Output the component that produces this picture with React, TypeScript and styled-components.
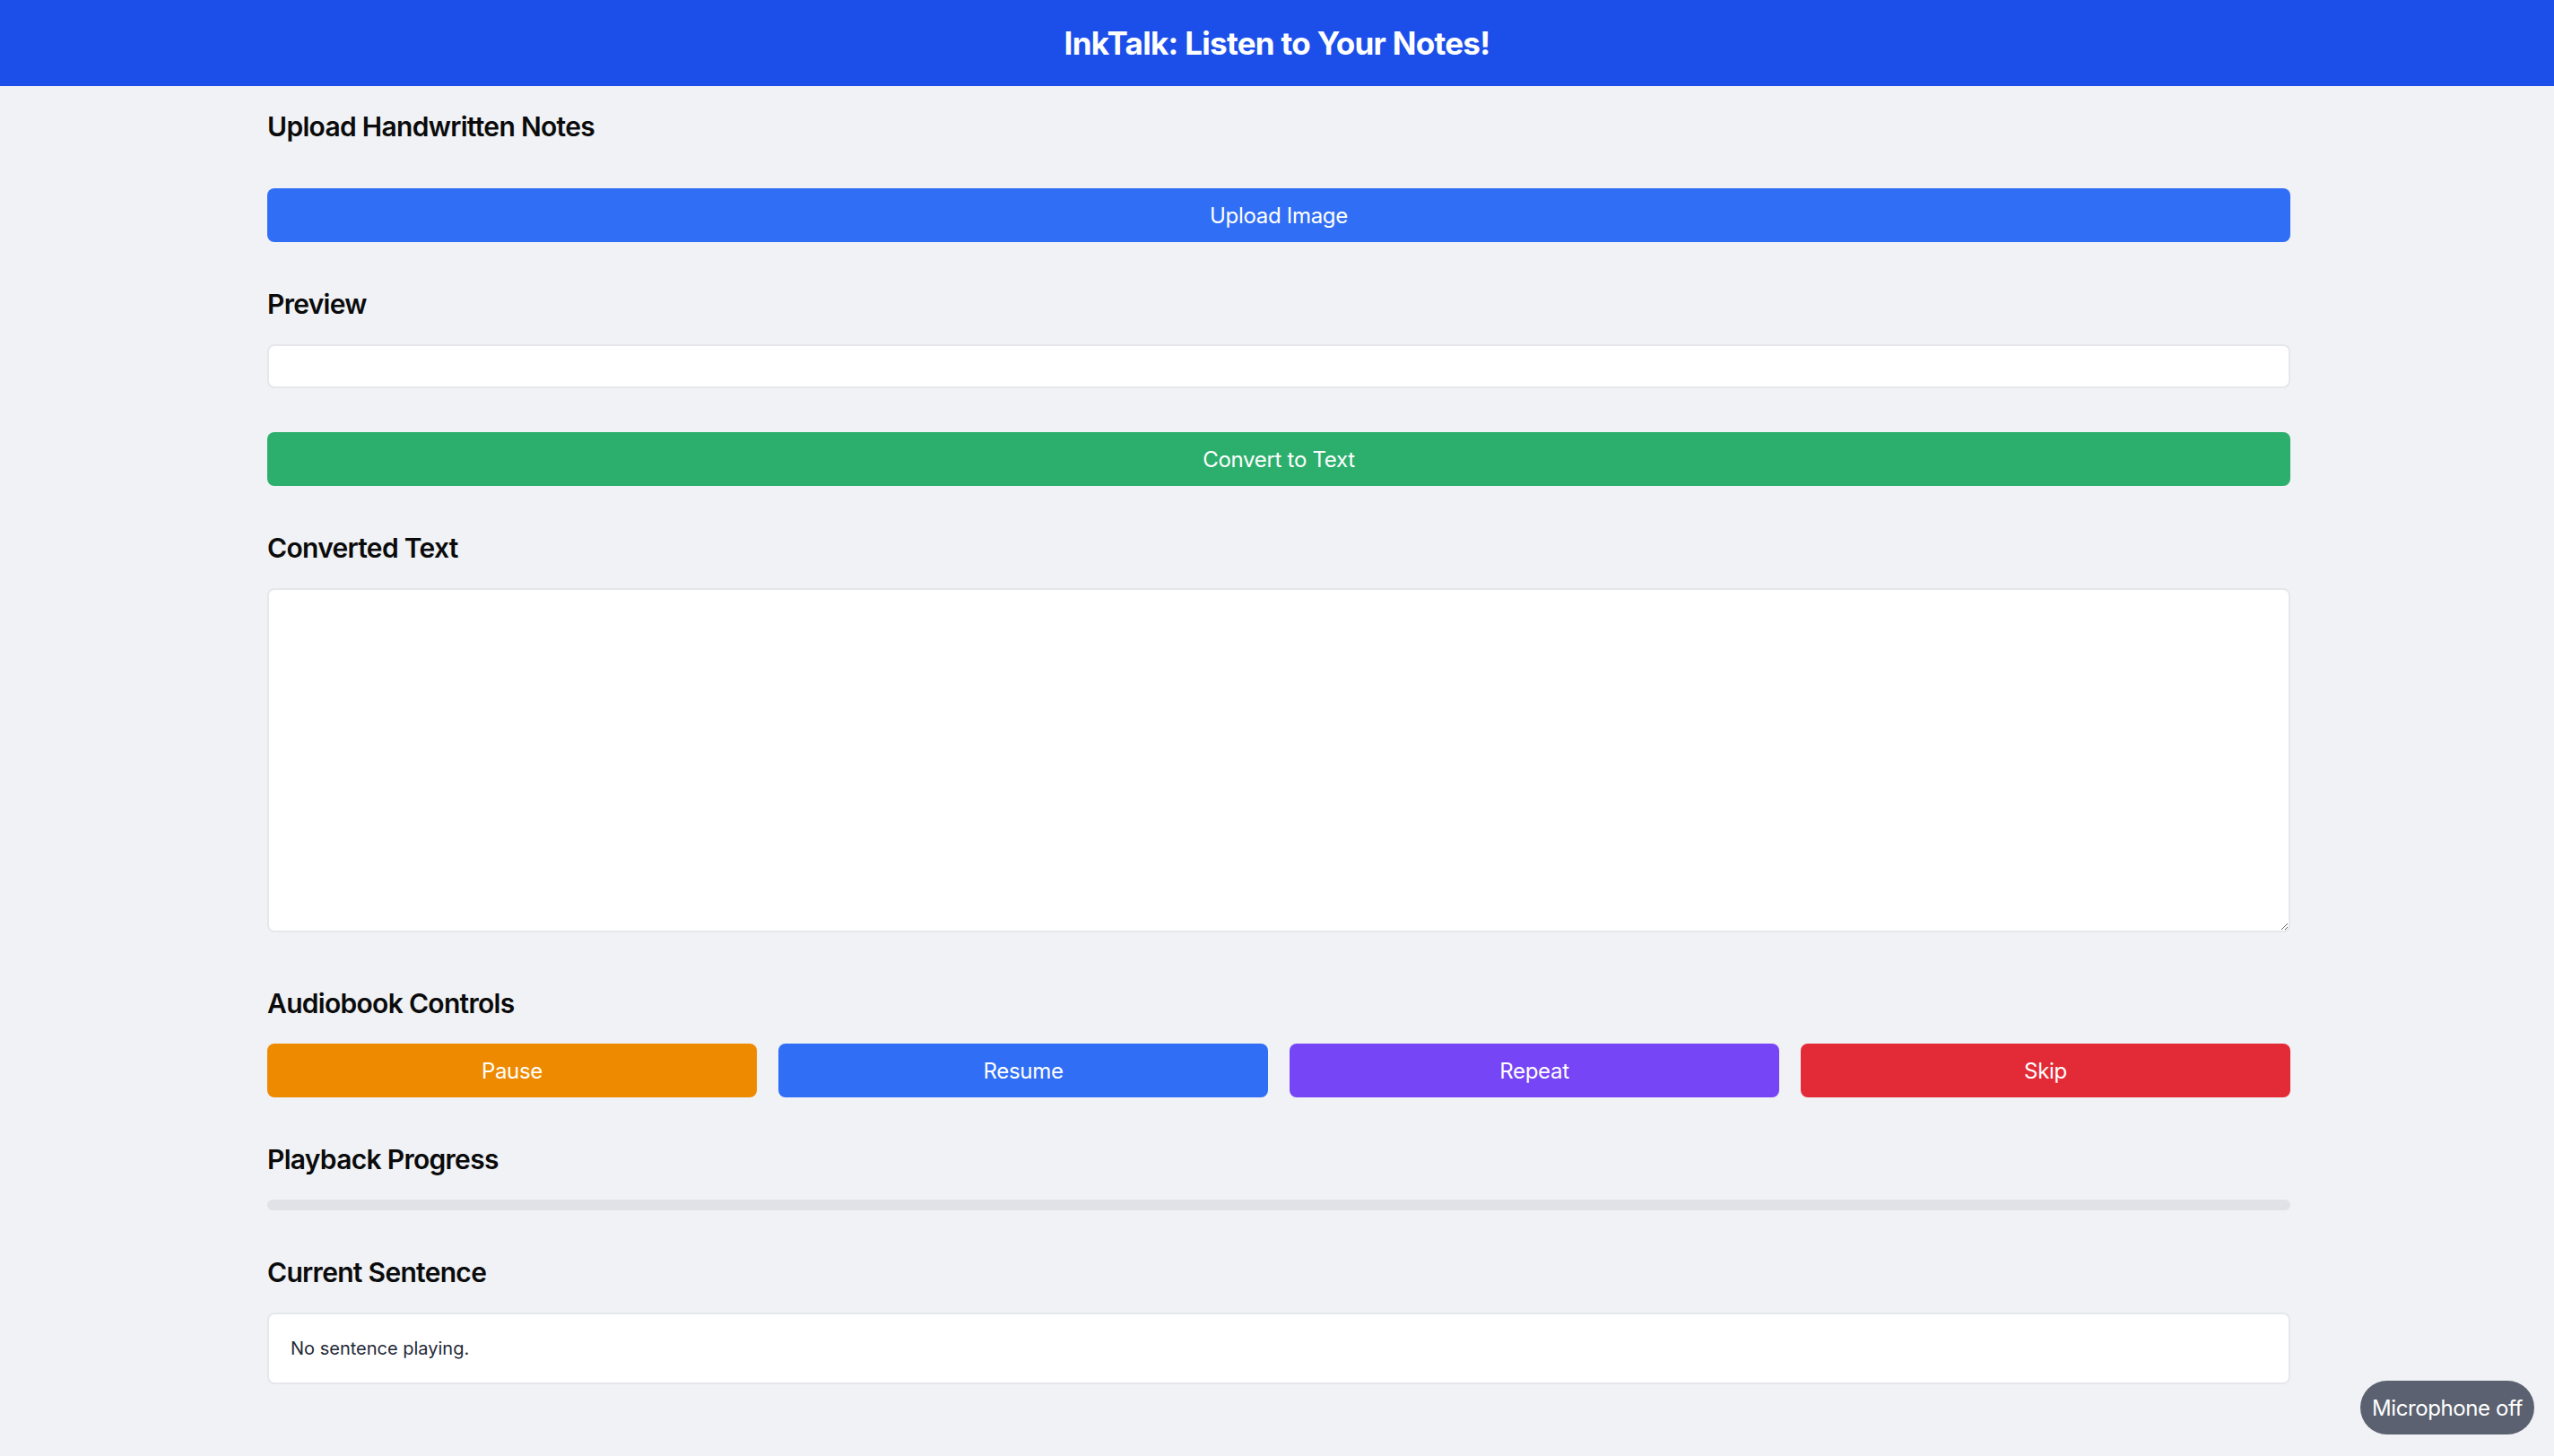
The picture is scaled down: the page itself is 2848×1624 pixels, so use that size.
import React from "react";
import styled, { createGlobalStyle } from "styled-components";

const GlobalStyle = createGlobalStyle`
  html, body {
    margin: 0;
    padding: 0;
    background: #f0f2f5;
    font-family: Inter, "Noto Sans", "Liberation Sans", sans-serif;
  }
  * { box-sizing: border-box; }
`;

const Page = styled.div`
  min-height: 1624px;
  background: #f0f2f5;
`;

const Header = styled.header`
  height: 96px;
  background: #1c4fea;
  display: flex;
  align-items: center;
  justify-content: center;
`;

const Title = styled.h1`
  margin: 0;
  color: #ffffff;
  font-size: 35px;
  font-weight: 700;
  line-height: 44px;
  letter-spacing: -0.7px;
`;

const Main = styled.main`
  width: 2256px;
  margin: 0 0 0 298px;
  padding-top: 25px;
  display: flex;
  flex-direction: column;
  gap: 49px;
`;

const Section = styled.section`
  display: flex;
  flex-direction: column;
`;

const Heading = styled.h2`
  margin: 0 0 25px 0;
  font-size: 30px;
  line-height: 40px;
  font-weight: 600;
  color: #0b0b0c;
  letter-spacing: -0.7px;
`;

const ActionButton = styled.button<{ $bg: string; $offset?: number }>`
  height: 60px;
  width: 100%;
  margin-top: ${(p) => p.$offset ?? 0}px;
  border: none;
  border-radius: 8px;
  background: ${(p) => p.$bg};
  color: #ffffff;
  font-family: Inter, "Noto Sans", "Liberation Sans", sans-serif;
  font-size: 24px;
  font-weight: 400;
  letter-spacing: -0.3px;
  cursor: pointer;
  padding: 0;
`;

const PreviewBox = styled.div`
  height: 49px;
  background: #ffffff;
  border: 2px solid #e5e7eb;
  border-radius: 8px;
`;

const TextArea = styled.textarea`
  display: block;
  width: 100%;
  height: 384px;
  margin-bottom: 10px;
  background: #ffffff;
  border: 2px solid #e5e7eb;
  border-radius: 8px;
  padding: 16px;
  font-family: Inter, "Noto Sans", "Liberation Sans", sans-serif;
  font-size: 24px;
  outline: none;
`;

const ControlsRow = styled.div`
  display: grid;
  grid-template-columns: repeat(4, 1fr);
  gap: 24px;
`;

const ProgressTrack = styled.div`
  height: 12px;
  border-radius: 6px;
  background: #e0e2e7;
  overflow: hidden;
`;

const ProgressFill = styled.div`
  height: 100%;
  background: #306ef5;
`;

const SentenceBox = styled.div`
  background: #ffffff;
  border: 2px solid #e5e7eb;
  border-radius: 8px;
  padding: 23px 24px;
  font-size: 20px;
  line-height: 30px;
  color: #1f2937;
`;

const MicPill = styled.div`
  position: fixed;
  right: 22px;
  bottom: 24px;
  height: 60px;
  padding: 0 13px;
  border-radius: 30px;
  background: #5b6170;
  color: #ffffff;
  font-size: 24px;
  letter-spacing: -0.4px;
  display: flex;
  align-items: center;
  white-space: nowrap;
`;

const controls = [
  { label: "Pause", bg: "#ee8a00" },
  { label: "Resume", bg: "#306ef5" },
  { label: "Repeat", bg: "#7645f5" },
  { label: "Skip", bg: "#e32b37" },
];

export default function App() {
  const progress = 0;
  return (
    <Page>
      <GlobalStyle />
      <Header>
        <Title>InkTalk: Listen to Your Notes!</Title>
      </Header>
      <Main>
        <Section>
          <Heading>Upload Handwritten Notes</Heading>
          <ActionButton $bg="#306ef5" $offset={24}>
            Upload Image
          </ActionButton>
        </Section>
        <Section>
          <Heading>Preview</Heading>
          <PreviewBox />
        </Section>
        <ActionButton $bg="#2caf6c">Convert to Text</ActionButton>
        <Section>
          <Heading>Converted Text</Heading>
          <TextArea />
        </Section>
        <Section>
          <Heading>Audiobook Controls</Heading>
          <ControlsRow>
            {controls.map((c) => (
              <ActionButton key={c.label} $bg={c.bg}>
                {c.label}
              </ActionButton>
            ))}
          </ControlsRow>
        </Section>
        <Section>
          <Heading>Playback Progress</Heading>
          <ProgressTrack>
            <ProgressFill style={{ width: `${progress}%` }} />
          </ProgressTrack>
        </Section>
        <Section>
          <Heading>Current Sentence</Heading>
          <SentenceBox>No sentence playing.</SentenceBox>
        </Section>
      </Main>
      <MicPill>Microphone off</MicPill>
    </Page>
  );
}
